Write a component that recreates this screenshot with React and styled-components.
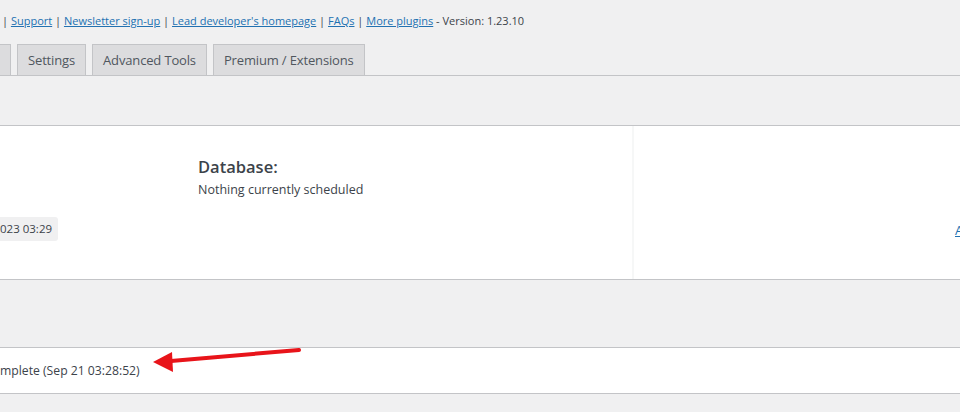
import styled, { createGlobalStyle } from "styled-components";

const GlobalStyle = createGlobalStyle`
  html, body {
    margin: 0;
    background: #f0f0f1;
    overflow: hidden;
  }
  body {
    font-family: "Open Sans", "Noto Sans", sans-serif;
    font-size: 12.5px;
    color: #3c434a;
  }
`;

const links = [
  "Support",
  "Newsletter sign-up",
  "Lead developer's homepage",
  "FAQs",
  "More plugins",
];

const tabs = ["Settings", "Advanced Tools", "Premium / Extensions"];

export default function App() {
  return (
    <>
      <GlobalStyle />
      <Page>
        <TopLine>
          {links.map((l, i) => (
            <span key={l}>
              {i === 0 ? "| " : " | "}
              <Link href="#">{l}</Link>
            </span>
          ))}
          {" - Version: 1.23.10"}
        </TopLine>

        <TabRow>
          <TabStub />
          {tabs.map((t) => (
            <Tab key={t}>{t}</Tab>
          ))}
        </TabRow>

        <Card $height={153}>
          <LeftCol>
            <DatePill>023 03:29</DatePill>
          </LeftCol>
          <MiddleCol>
            <Heading>Database:</Heading>
            <Note>Nothing currently scheduled</Note>
          </MiddleCol>
          <RightCol>
            <Link href="#">Add</Link>
          </RightCol>
        </Card>

        <Card $height={45} $top={67}>
          <StatusText>mplete (Sep 21 03:28:52)</StatusText>
        </Card>

        <Arrow viewBox="0 0 150 26" width="150" height="26">
          <line x1="148" y1="2" x2="20" y2="13" stroke="#e8141a" strokeWidth="4" strokeLinecap="round" />
          <polygon points="2,14 21,4 22,24" fill="#e8141a" />
        </Arrow>
      </Page>
    </>
  );
}

const Page = styled.div`
  position: relative;
  padding-top: 13px;
  min-height: 412px;
  box-sizing: border-box;
`;

const TopLine = styled.div`
  line-height: 16px;
  height: 16px;
  padding-left: 2px;
  font-size: 11px;
  white-space: nowrap;
`;

const Link = styled.a`
  color: #2271b1;
  text-decoration: underline;
`;

const TabRow = styled.div`
  display: flex;
  align-items: flex-end;
  gap: 6px;
  margin-top: 14px;
  height: 32px;
  border-bottom: 1px solid #c3c4c7;
`;

const Tab = styled.div`
  flex-shrink: 0;
  height: 31px;
  box-sizing: border-box;
  padding: 0 10px;
  line-height: 30px;
  background: #dcdcde;
  border: 1px solid #c3c4c7;
  border-bottom: none;
  font-size: 13px;
  font-weight: 500;
  letter-spacing: -0.15px;
  color: #50575e;
  white-space: nowrap;
`;

const TabStub = styled(Tab)`
  width: 11px;
  padding: 0;
  border-left: none;
`;

const Card = styled.div`
  display: flex;
  margin-top: ${(p) => p.$top ?? 49}px;
  height: ${(p) => p.$height}px;
  background: #fff;
  border-top: 1px solid #c3c4c7;
  border-bottom: 1px solid #c3c4c7;
  overflow: hidden;
`;

const LeftCol = styled.div`
  flex-shrink: 0;
  width: 198px;
  padding-top: 91px;
`;

const DatePill = styled.span`
  display: inline-block;
  height: 24px;
  line-height: 24px;
  padding: 0 6px 0 0;
  background: #f0f0f1;
  border-radius: 0 3px 3px 0;
  font-size: 11.5px;
`;

const MiddleCol = styled.div`
  flex-shrink: 0;
  width: 434px;
  padding-top: 29px;
`;

const Heading = styled.h3`
  margin: 0 0 2px;
  font-size: 16.5px;
  line-height: 24px;
  font-weight: 600;
  color: #3c434a;
`;

const Note = styled.div`
  line-height: 18px;
`;

const RightCol = styled.div`
  flex-shrink: 0;
  border-left: 2px solid #f6f7f7;
  padding: 95px 0 0 321px;
  white-space: nowrap;
  font-size: 13px;
`;

const StatusText = styled.div`
  align-self: center;
  font-size: 12.2px;
`;

const Arrow = styled.svg`
  position: absolute;
  left: 151px;
  top: 348px;
`;
